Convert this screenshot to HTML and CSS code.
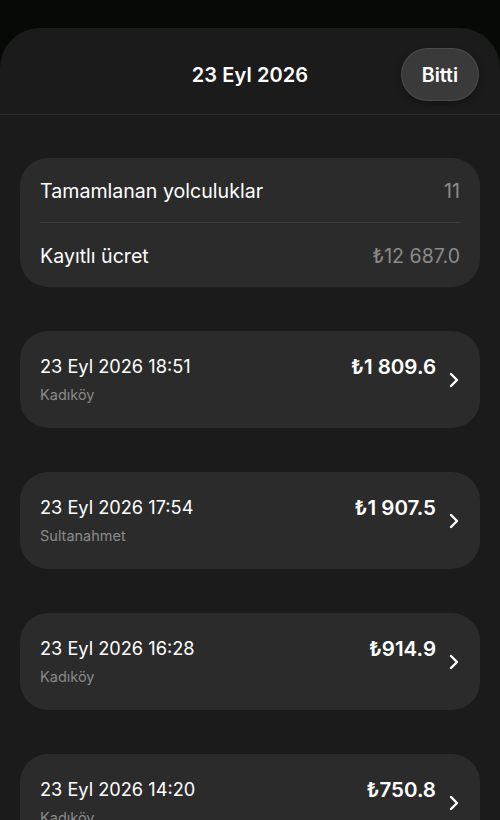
FILE: index.html
```html
<!DOCTYPE html>
<html lang="tr">
<head>
    <meta charset="UTF-8">
    <meta name="viewport" content="width=device-width, initial-scale=1.0">
    <title>23 Eyl 2026</title>
    <link rel="stylesheet" href="styles.css">
</head>
<body>
    <div class="sheet">
        <!-- Başlık -->
        <header class="sheet-header">
            <span class="spacer"></span>
            <h1>23 Eyl 2026</h1>
            <button class="done-btn">Bitti</button>
        </header>

        <div class="content">
            <!-- Özet -->
            <div class="card summary">
                <div class="summary-row">
                    <span>Tamamlanan yolculuklar</span>
                    <span class="muted">11</span>
                </div>
                <div class="summary-row">
                    <span>Kayıtlı ücret</span>
                    <span class="muted">₺12 687.0</span>
                </div>
            </div>

            <!-- Yolculuklar -->
            <div class="card trip">
                <div class="trip-info">
                    <div class="trip-date">23 Eyl 2026 18:51</div>
                    <div class="trip-place">Kadıköy</div>
                </div>
                <div class="trip-price">₺1 809.6</div>
                <svg class="chevron" viewBox="0 0 12 16"><path d="M3 2 L9 8 L3 14"/></svg>
            </div>

            <div class="card trip">
                <div class="trip-info">
                    <div class="trip-date">23 Eyl 2026 17:54</div>
                    <div class="trip-place">Sultanahmet</div>
                </div>
                <div class="trip-price">₺1 907.5</div>
                <svg class="chevron" viewBox="0 0 12 16"><path d="M3 2 L9 8 L3 14"/></svg>
            </div>

            <div class="card trip">
                <div class="trip-info">
                    <div class="trip-date">23 Eyl 2026 16:28</div>
                    <div class="trip-place">Kadıköy</div>
                </div>
                <div class="trip-price">₺914.9</div>
                <svg class="chevron" viewBox="0 0 12 16"><path d="M3 2 L9 8 L3 14"/></svg>
            </div>

            <div class="card trip">
                <div class="trip-info">
                    <div class="trip-date">23 Eyl 2026 14:20</div>
                    <div class="trip-place">Kadıköy</div>
                </div>
                <div class="trip-price">₺750.8</div>
                <svg class="chevron" viewBox="0 0 12 16"><path d="M3 2 L9 8 L3 14"/></svg>
            </div>
        </div>
    </div>
</body>
</html>
```

FILE: styles.css
```css
* { box-sizing: border-box; }
html, body {
    height: 100%;
}
body {
    margin: 0;
    padding-top: 28px;
    background-color: #070907;
    color: #fff;
    font-family: 'Inter', 'Noto Sans', sans-serif;
    overflow: hidden;
}
.sheet {
    background-color: #1b1b1b;
    border-radius: 40px 40px 0 0;
    min-height: 100%;
}
.sheet-header {
    display: flex;
    align-items: center;
    justify-content: space-between;
    padding: 20px 21px 13px 21px;
    border-bottom: 1px solid #2a2a2a;
}
.spacer {
    width: 78px;
}
h1 {
    margin: 0;
    font-size: 20px;
    font-weight: 600;
    letter-spacing: 0.1px;
}
.done-btn {
    width: 78px;
    height: 53px;
    border-radius: 27px;
    border: 1px solid rgba(255,255,255,0.09);
    background-color: #3a3a3a;
    color: #fff;
    font-family: inherit;
    font-size: 19.5px;
    font-weight: 600;
    padding: 0;
    box-shadow: 0 2px 6px rgba(0,0,0,0.35);
}
.content {
    padding: 43px 20px 0 20px;
    display: flex;
    flex-direction: column;
    gap: 44px;
}
.card {
    background-color: #2b2b2b;
    border-radius: 28px;
}
.summary {
    padding: 0 20px;
}
.summary-row {
    display: flex;
    justify-content: space-between;
    align-items: center;
    height: 64px;
    font-size: 19.6px;
    padding-top: 1px;
}
.summary-row + .summary-row {
    border-top: 1px solid #3d3d3d;
    height: 65px;
}
.muted {
    color: #8b8b8b;
}
.trip {
    display: flex;
    align-items: center;
    height: 97px;
    padding: 0 20px;
}
.trip-info {
    flex: 1;
    display: flex;
    flex-direction: column;
    gap: 9px;
    padding-bottom: 2px;
}
.trip-date {
    font-size: 18.2px;
}
.trip-place {
    font-size: 14.5px;
    color: #8a8a8a;
}
.trip-price {
    align-self: flex-start;
    margin-top: 23px;
    font-size: 20.5px;
    font-weight: 600;
}
.chevron {
    width: 12px;
    height: 16px;
    margin-left: 12px;
    fill: none;
    stroke: #fff;
    stroke-width: 2.4;
    stroke-linecap: round;
    stroke-linejoin: round;
}
```
